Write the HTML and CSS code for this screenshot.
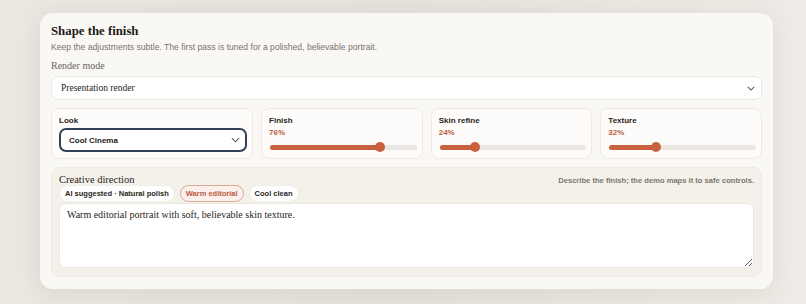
FILE: index.html
```html
<!DOCTYPE html>
<html lang="en">
<head>
    <meta charset="UTF-8">
    <meta name="viewport" content="width=device-width, initial-scale=1.0">
    <title>Shape the finish</title>
    <link rel="stylesheet" href="styles.css">
</head>
<body>
    <div class="panel">
        <h1>Shape the finish</h1>
        <p class="lead">Keep the adjustments subtle. The first pass is tuned for a polished, believable portrait.</p>

        <label class="field-label">Render mode</label>
        <div class="select wide">
            <span>Presentation render</span>
            <svg class="chev" viewBox="0 0 10 6" width="8" height="5"><path d="M1 1l4 4 4-4" fill="none" stroke="#555" stroke-width="1.3"/></svg>
        </div>

        <div class="controls">
            <div class="control">
                <div class="control-label">Look</div>
                <div class="select look">
                    <span>Cool Cinema</span>
                    <svg class="chev" viewBox="0 0 10 6" width="9" height="6"><path d="M1 1l4 4 4-4" fill="none" stroke="#555" stroke-width="1.2"/></svg>
                </div>
            </div>
            <div class="control">
                <div class="control-label">Finish</div>
                <div class="value">76%</div>
                <div class="slider"><div class="fill" style="width: 75%"></div></div>
            </div>
            <div class="control">
                <div class="control-label">Skin refine</div>
                <div class="value">24%</div>
                <div class="slider"><div class="fill" style="width: 24%"></div></div>
            </div>
            <div class="control">
                <div class="control-label">Texture</div>
                <div class="value">32%</div>
                <div class="slider"><div class="fill" style="width: 32%"></div></div>
            </div>
        </div>

        <div class="direction">
            <div class="direction-head">
                <span class="direction-title">Creative direction</span>
                <span class="hint">Describe the finish; the demo maps it to safe controls.</span>
            </div>
            <div class="chips">
                <button class="chip">AI suggested · Natural polish</button>
                <button class="chip active">Warm editorial</button>
                <button class="chip">Cool clean</button>
            </div>
            <textarea class="prompt">Warm editorial portrait with soft, believable skin texture.</textarea>
        </div>
    </div>
</body>
</html>
```

FILE: styles.css
```css
* {
    box-sizing: border-box;
}
body {
    margin: 0;
    height: 304px;
    font-family: 'Liberation Sans', Arial, sans-serif;
    background: linear-gradient(90deg, #ebe7e1 0%, #e6e2dc 50%, #efebe6 100%);
    padding: 13px 33px 0 40px;
}
.panel {
    background-color: #faf8f5;
    border-radius: 13px;
    box-shadow: 0 4px 24px rgba(90, 70, 50, 0.10);
    padding: 11px 11px 12px;
    width: 733px;
}
.panel h1 {
    margin: 0;
    font-family: 'Liberation Serif', Georgia, serif;
    font-size: 12.8px;
    font-weight: bold;
    color: #1f1a16;
}
.lead {
    margin: 3px 0 0;
    font-size: 8.6px;
    color: #7a736c;
}
.field-label {
    display: block;
    margin-top: 8px;
    font-family: 'Liberation Serif', Georgia, serif;
    font-size: 10px;
    color: #6b645d;
}
.select {
    display: flex;
    align-items: center;
    justify-content: space-between;
    background: #ffffff;
    border-radius: 7px;
}
.select.wide {
    margin-top: 5px;
    height: 24px;
    border: 1px solid #ece7e1;
    padding: 0 6px 0 9px;
    font-family: 'Liberation Serif', Georgia, serif;
    font-size: 9.5px;
    color: #2a2420;
}
.controls {
    display: grid;
    grid-template-columns: 1.25fr 1fr 1fr 1fr;
    gap: 8px;
    margin-top: 8px;
}
.control {
    background: #fdfcfa;
    border: 1px solid #eee9e3;
    border-radius: 8px;
    height: 51px;
    padding: 7px 5px 0 7px;
}
.control-label {
    font-size: 8px;
    font-weight: bold;
    color: #2a2420;
}
.value {
    margin-top: 3px;
    font-size: 8px;
    font-weight: bold;
    color: #b95a42;
}
.slider {
    position: relative;
    margin: 8px 0 0 1px;
    height: 5px;
    border-radius: 3px;
    background: #e9e6e3;
}
.fill {
    position: relative;
    height: 100%;
    border-radius: 3px;
    background: #c9613f;
}
.fill::after {
    content: '';
    position: absolute;
    right: -5px;
    top: -3px;
    width: 10px;
    height: 10px;
    border-radius: 50%;
    background: #c9613f;
}
.select.look {
    margin-top: 3px;
    height: 24px;
    border: 2px solid #34405a;
    padding: 0 5px 0 8px;
    font-size: 8px;
    font-weight: bold;
    color: #1f1a16;
}
.direction {
    margin-top: 8px;
    background: #f4f0ea;
    border: 1px solid #ede8e1;
    border-radius: 9px;
    padding: 6px 7px 8px;
}
.direction-head {
    display: flex;
    justify-content: space-between;
    align-items: baseline;
}
.direction-title {
    font-family: 'Liberation Serif', Georgia, serif;
    font-size: 10.5px;
    color: #2a2420;
}
.hint {
    font-size: 7.6px;
    font-weight: bold;
    color: #7d766f;
}
.chips {
    display: flex;
    gap: 5px;
    margin-top: 0;
}
.chip {
    font-family: 'Liberation Sans', Arial, sans-serif;
    font-size: 7.5px;
    font-weight: bold;
    color: #2a2420;
    background: #ffffff;
    border: 1px solid #f1ece6;
    border-radius: 9px;
    height: 17px;
    padding: 0 5px;
}
.chip.active {
    color: #b95a42;
    background: #fbf0ec;
    border-color: #dba797;
}
.prompt {
    display: block;
    width: 100%;
    height: 65px;
    margin-top: 1px;
    border: 1px solid #ece7e1;
    border-radius: 7px;
    background: #ffffff;
    padding: 5px 7px;
    font-family: 'Liberation Serif', Georgia, serif;
    font-size: 10px;
    color: #2a2420;
    resize: vertical;
}
```
